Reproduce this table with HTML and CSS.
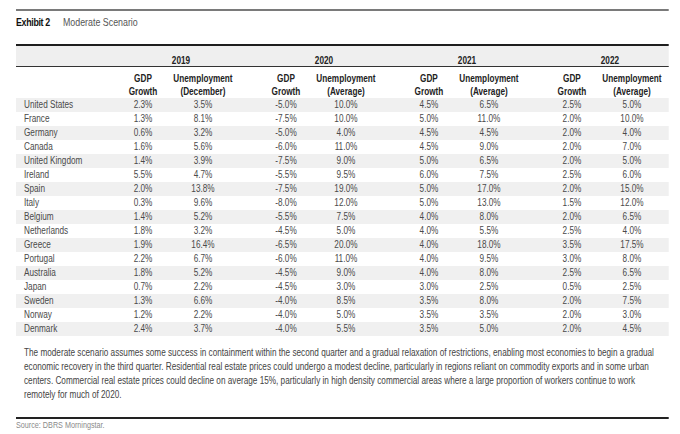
FILE: index.html
```html
<!DOCTYPE html>
<html>
<head>
<meta charset="utf-8">
<link rel="stylesheet" href="styles.css">
</head>
<body>
<div class="page">
 <div class="sx">
  <div class="topline"></div>
  <div class="title"><b>Exhibit 2</b><span>Moderate Scenario</span></div>
  <div class="tbl">
    <div class="yrow">
      <div></div>
      <div class="yr">2019</div>
      <div class="yr">2020</div>
      <div class="yr">2021</div>
      <div class="yr">2022</div>
      <div></div>
    </div>
    <div class="row head">
      <div class="name"></div>
      <div class="g">GDP<br>Growth</div><div class="u">Unemployment<br>(December)</div>
      <div class="g">GDP<br>Growth</div><div class="u">Unemployment<br>(Average)</div>
      <div class="g">GDP<br>Growth</div><div class="u">Unemployment<br>(Average)</div>
      <div class="g">GDP<br>Growth</div><div class="u last">Unemployment<br>(Average)</div>
    </div>
    <div class="row alt"><div class="name">United States</div><div class="g">2.3%</div><div class="u">3.5%</div><div class="g">-5.0%</div><div class="u">10.0%</div><div class="g">4.5%</div><div class="u">6.5%</div><div class="g">2.5%</div><div class="u last">5.0%</div></div>
    <div class="row"><div class="name">France</div><div class="g">1.3%</div><div class="u">8.1%</div><div class="g">-7.5%</div><div class="u">10.0%</div><div class="g">5.0%</div><div class="u">11.0%</div><div class="g">2.0%</div><div class="u last">10.0%</div></div>
    <div class="row alt"><div class="name">Germany</div><div class="g">0.6%</div><div class="u">3.2%</div><div class="g">-5.0%</div><div class="u">4.0%</div><div class="g">4.5%</div><div class="u">4.5%</div><div class="g">2.0%</div><div class="u last">4.0%</div></div>
    <div class="row"><div class="name">Canada</div><div class="g">1.6%</div><div class="u">5.6%</div><div class="g">-6.0%</div><div class="u">11.0%</div><div class="g">4.5%</div><div class="u">9.0%</div><div class="g">2.0%</div><div class="u last">7.0%</div></div>
    <div class="row alt"><div class="name">United Kingdom</div><div class="g">1.4%</div><div class="u">3.9%</div><div class="g">-7.5%</div><div class="u">9.0%</div><div class="g">5.0%</div><div class="u">6.5%</div><div class="g">2.0%</div><div class="u last">5.0%</div></div>
    <div class="row"><div class="name">Ireland</div><div class="g">5.5%</div><div class="u">4.7%</div><div class="g">-5.5%</div><div class="u">9.5%</div><div class="g">6.0%</div><div class="u">7.5%</div><div class="g">2.5%</div><div class="u last">6.0%</div></div>
    <div class="row alt"><div class="name">Spain</div><div class="g">2.0%</div><div class="u">13.8%</div><div class="g">-7.5%</div><div class="u">19.0%</div><div class="g">5.0%</div><div class="u">17.0%</div><div class="g">2.0%</div><div class="u last">15.0%</div></div>
    <div class="row"><div class="name">Italy</div><div class="g">0.3%</div><div class="u">9.6%</div><div class="g">-8.0%</div><div class="u">12.0%</div><div class="g">5.0%</div><div class="u">13.0%</div><div class="g">1.5%</div><div class="u last">12.0%</div></div>
    <div class="row alt"><div class="name">Belgium</div><div class="g">1.4%</div><div class="u">5.2%</div><div class="g">-5.5%</div><div class="u">7.5%</div><div class="g">4.0%</div><div class="u">8.0%</div><div class="g">2.0%</div><div class="u last">6.5%</div></div>
    <div class="row"><div class="name">Netherlands</div><div class="g">1.8%</div><div class="u">3.2%</div><div class="g">-4.5%</div><div class="u">5.0%</div><div class="g">4.0%</div><div class="u">5.5%</div><div class="g">2.5%</div><div class="u last">4.0%</div></div>
    <div class="row alt"><div class="name">Greece</div><div class="g">1.9%</div><div class="u">16.4%</div><div class="g">-6.5%</div><div class="u">20.0%</div><div class="g">4.0%</div><div class="u">18.0%</div><div class="g">3.5%</div><div class="u last">17.5%</div></div>
    <div class="row"><div class="name">Portugal</div><div class="g">2.2%</div><div class="u">6.7%</div><div class="g">-6.0%</div><div class="u">11.0%</div><div class="g">4.0%</div><div class="u">9.5%</div><div class="g">3.0%</div><div class="u last">8.0%</div></div>
    <div class="row alt"><div class="name">Australia</div><div class="g">1.8%</div><div class="u">5.2%</div><div class="g">-4.5%</div><div class="u">9.0%</div><div class="g">4.0%</div><div class="u">8.0%</div><div class="g">2.5%</div><div class="u last">6.5%</div></div>
    <div class="row"><div class="name">Japan</div><div class="g">0.7%</div><div class="u">2.2%</div><div class="g">-4.5%</div><div class="u">3.0%</div><div class="g">3.0%</div><div class="u">2.5%</div><div class="g">0.5%</div><div class="u last">2.5%</div></div>
    <div class="row alt"><div class="name">Sweden</div><div class="g">1.3%</div><div class="u">6.6%</div><div class="g">-4.0%</div><div class="u">8.5%</div><div class="g">3.5%</div><div class="u">8.0%</div><div class="g">2.0%</div><div class="u last">7.5%</div></div>
    <div class="row"><div class="name">Norway</div><div class="g">1.2%</div><div class="u">2.2%</div><div class="g">-4.0%</div><div class="u">5.0%</div><div class="g">3.5%</div><div class="u">3.5%</div><div class="g">2.0%</div><div class="u last">3.0%</div></div>
    <div class="row alt"><div class="name">Denmark</div><div class="g">2.4%</div><div class="u">3.7%</div><div class="g">-4.0%</div><div class="u">5.5%</div><div class="g">3.5%</div><div class="u">5.0%</div><div class="g">2.0%</div><div class="u last">4.5%</div></div>
  </div>
  <p class="note">The moderate scenario assumes some success in containment within the second quarter and a gradual relaxation of restrictions, enabling most economies to begin a gradual<br>economic recovery in the third quarter. Residential real estate prices could undergo a modest decline, particularly in regions reliant on commodity exports and in some urban<br>centers. Commercial real estate prices could decline on average 15%, particularly in high density commercial areas where a large proportion of workers continue to work<br>remotely for much of 2020.</p>
  <div class="source">Source: DBRS Morningstar.</div>
 </div>
</div>
</body>
</html>
```

FILE: styles.css
```css
* { box-sizing: border-box; }
:root { --k: 0.82; }
body {
  margin: 0;
  background: #ffffff;
  font-family: "Liberation Sans", Arial, sans-serif;
  color: #4a4a4a;
}
.page {
  padding: 9px 0 0 16px;
}
/* condensed type: the whole sheet is drawn narrow, like Arial Narrow */
.sx {
  width: calc(653px / var(--k));
  transform: scaleX(var(--k));
  transform-origin: left top;
}
.topline {
  border-top: 2px solid #7a7a7a;
}
.title {
  margin-top: 4px;
  font-size: 10.8px;
  line-height: 14px;
  color: #555;
}
.title b {
  color: #111;
  letter-spacing: -0.4px;
  margin-right: calc(13px / var(--k));
}
.tbl {
  margin-top: 15px;
  border-top: 2px solid #1e1e1e;
}
.yrow {
  display: grid;
  grid-template-columns: calc(76px / var(--k)) repeat(4, calc(143px / var(--k))) 1fr;
  background: #efefef;
  border-bottom: 1px solid #333;
  height: 21px;
  padding-top: 9px;
  font-size: 10px;
  line-height: 11px;
  font-weight: bold;
  color: #222;
}
.yr {
  padding-left: calc(35px / var(--k));
  text-align: center;
}
.row {
  display: grid;
  grid-template-columns:
    calc(76px / var(--k))
    calc(79px / var(--k)) calc(64px / var(--k))
    calc(79px / var(--k)) calc(64px / var(--k))
    calc(79px / var(--k)) calc(64px / var(--k))
    calc(79px / var(--k)) 1fr;
  height: 14px;
  font-size: 10px;
  line-height: 14px;
  white-space: nowrap;
}
.row.alt {
  background: #f0f0f0;
}
.row.head {
  height: 31px;
  padding-top: 5px;
  line-height: 13px;
  font-weight: bold;
  color: #222;
}
.name {
  padding-left: calc(8px / var(--k));
}
.g {
  padding-left: calc(23px / var(--k));
  text-align: center;
}
.u {
  text-align: center;
}
.u.last {
  padding-right: calc(5px / var(--k));
}
.note {
  margin: 10px 0 0 0;
  padding-left: calc(8px / var(--k));
  font-size: 10px;
  line-height: 14px;
  color: #444;
  white-space: nowrap;
}
.source {
  margin-top: 15px;
  border-top: 2px solid #222;
  font-size: 8.8px;
  line-height: 12px;
  color: #8a8a8a;
}
```
